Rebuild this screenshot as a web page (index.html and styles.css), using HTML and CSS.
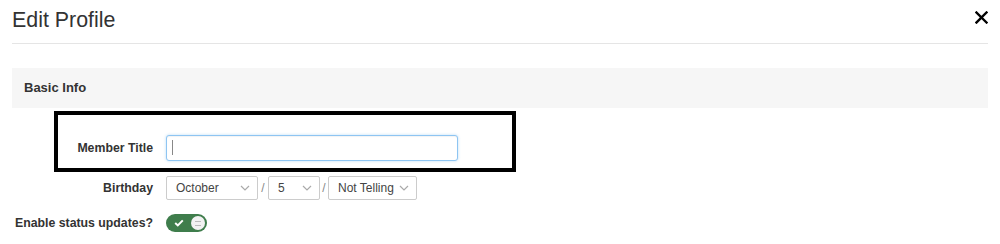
FILE: index.html
```html
<!DOCTYPE html>
<html>
<head>
<meta charset="utf-8">
<link rel="stylesheet" href="styles.css">
</head>
<body>
<div class="modal">
  <div class="header">
    <h1 class="title">Edit Profile</h1>
    <button class="close" aria-label="Close">
      <svg width="13" height="13" viewBox="0 0 13 13"><path d="M1.5 1.5 L11.5 11.5 M11.5 1.5 L1.5 11.5" stroke="#000" stroke-width="2.4" stroke-linecap="square"/></svg>
    </button>
  </div>
  <div class="section">Basic Info</div>
  <div class="highlight">
    <div class="row row-title">
      <label class="label label-in">Member Title</label>
      <span class="input-wrap">
        <input class="input" type="text">
        <span class="caret"></span>
      </span>
    </div>
  </div>
  <div class="row row-bday">
    <label class="label">Birthday</label>
    <span class="sel sel-month"><span class="sel-text">October</span><svg class="chev" width="10" height="6" viewBox="0 0 10 6"><path d="M1 1 L5 5 L9 1" fill="none" stroke="#aaa" stroke-width="1.2"/></svg></span>
    <span class="slash">/</span>
    <span class="sel sel-day"><span class="sel-text">5</span><svg class="chev" width="10" height="6" viewBox="0 0 10 6"><path d="M1 1 L5 5 L9 1" fill="none" stroke="#aaa" stroke-width="1.2"/></svg></span>
    <span class="slash slash2">/</span>
    <span class="sel sel-year"><span class="sel-text">Not Telling</span><svg class="chev" width="10" height="6" viewBox="0 0 10 6"><path d="M1 1 L5 5 L9 1" fill="none" stroke="#aaa" stroke-width="1.2"/></svg></span>
  </div>
  <div class="row row-toggle">
    <label class="label label-wide">Enable status updates?</label>
    <span class="toggle">
      <svg class="check" width="10" height="8" viewBox="0 0 10 8"><path d="M1.2 4 L3.8 6.4 L8.8 1.4" fill="none" stroke="#fff" stroke-width="2"/></svg>
      <span class="knob"><span class="bars"></span></span>
    </span>
  </div>
</div>
</body>
</html>
```
FILE: styles.css
```css
html, body {
  margin: 0;
  padding: 0;
  background: #fff;
}
body {
  font-family: "Liberation Sans", Arial, sans-serif;
  color: #333;
}
.modal {
  padding: 0 12px;
}
.header {
  display: flex;
  justify-content: space-between;
  align-items: flex-start;
  border-bottom: 1px solid #e5e5e5;
  height: 43px;
}
.title {
  margin: 0;
  padding-top: 8px;
  font-size: 21.4px;
  font-weight: normal;
  line-height: 24px;
  color: #333;
}
.close {
  border: 0;
  background: none;
  padding: 0;
  margin: 11px 0 0 0;
  width: 13px;
  height: 13px;
  display: block;
}
.close svg { display: block; }
.section {
  margin-top: 24px;
  height: 40px;
  line-height: 40px;
  background: #f6f6f6;
  padding-left: 12px;
  font-size: 13px;
  font-weight: bold;
  color: #333;
}
.highlight {
  margin: 3px 0 0 42px;
  width: 454px;
  border: 4px solid #000;
  padding: 20px 0 7px;
}
.row {
  display: flex;
  align-items: center;
  gap: 13px;
}
.label {
  font-size: 12.3px;
  font-weight: bold;
  color: #333;
  text-align: right;
  width: 141px;
  flex: none;
}
.label-in {
  width: 95px;
}
.input-wrap {
  position: relative;
  display: block;
}
.input {
  display: block;
  box-sizing: border-box;
  width: 292px;
  height: 26px;
  margin: 0;
  border: 1px solid #8ec5f2;
  border-radius: 3px;
  box-shadow: 0 0 3px rgba(102, 175, 233, 0.45), inset 0 1px 1px rgba(0,0,0,0.05);
  outline: none;
  background: #fff;
}
.caret {
  position: absolute;
  left: 6px;
  top: 5px;
  width: 1px;
  height: 15px;
  background: #888;
}
.row-bday {
  margin-top: 4px;
  height: 24px;
  gap: 0;
}
.row-bday .label {
  margin-right: 13px;
}
.sel {
  box-sizing: border-box;
  height: 24px;
  border: 1px solid #ccc;
  border-radius: 2px;
  background: #fff;
  display: flex;
  align-items: center;
  justify-content: space-between;
  padding: 0 7px 0 9px;
  font-size: 12px;
  color: #444;
}
.sel-month { width: 92px; }
.sel-day { width: 52px; }
.sel-year { width: 89px; }
.chev { display: block; }
.slash {
  width: 10px;
  text-align: center;
  font-size: 12px;
  color: #888;
}
.slash2 { width: 8px; }
.row-toggle {
  margin-top: 14px;
  height: 18px;
}
.label-wide {
  width: 141px;
  white-space: nowrap;
  text-align: right;
}
.toggle {
  box-sizing: border-box;
  width: 41px;
  height: 18px;
  border-radius: 9px;
  background: #3f7d4c;
  display: flex;
  align-items: center;
  justify-content: space-between;
  padding: 0 2px 0 8px;
}
.check { display: block; }
.knob {
  width: 14px;
  height: 14px;
  border-radius: 50%;
  background: #f2f2f2;
  display: flex;
  align-items: center;
  justify-content: center;
}
.bars {
  width: 6px;
  height: 5px;
  border-top: 1px solid #bbb;
  border-bottom: 1px solid #bbb;
  box-sizing: border-box;
}
```
